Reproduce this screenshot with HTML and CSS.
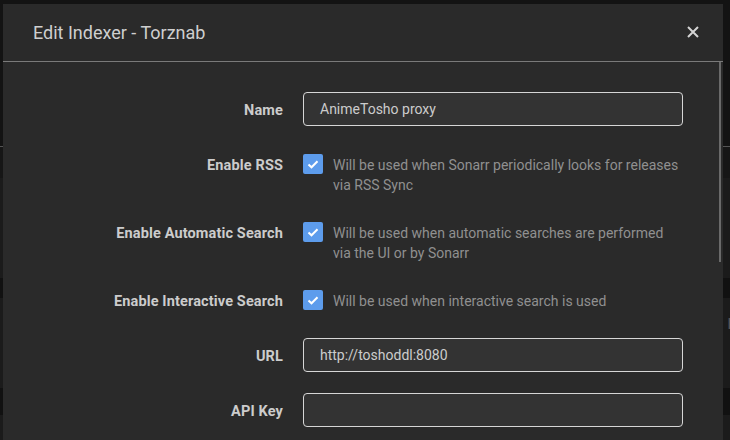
FILE: index.html
```html
<!DOCTYPE html>
<html>
<head>
<meta charset="utf-8">
<link rel="stylesheet" href="styles.css">
</head>
<body>
<div class="page">
  <div class="pg-top"></div>
  <div class="pg-line"></div>
  <div class="pg-a"></div>
  <div class="pg-b"></div>
  <div class="pg-c"></div>
  <div class="pg-d"><span class="pg-letter">r</span></div>
  <div class="pg-e"></div>
  <div class="pg-f"></div>
</div>
<div class="modal">
  <div class="modal-header">
    <h2 class="modal-title">Edit Indexer - Torznab</h2>
    <button class="close-btn" aria-label="Close">
      <svg width="12" height="12" viewBox="0 0 12 12"><path d="M1 1 L11 11 M11 1 L1 11" stroke="#d4d4d4" stroke-width="2" fill="none"/></svg>
    </button>
  </div>
  <div class="modal-body">
    <div class="group">
      <label class="label">Name</label>
      <div class="control"><div class="input">AnimeTosho proxy</div></div>
    </div>
    <div class="group">
      <label class="label">Enable RSS</label>
      <div class="control check-control">
        <span class="checkbox"><svg width="20" height="20" viewBox="0 0 20 20"><path d="M5.5 10.5 L8.5 13.3 L14.5 7.2" stroke="#fff" stroke-width="2" fill="none"/></svg></span>
        <span class="help">Will be used when Sonarr periodically looks for releases via RSS Sync</span>
      </div>
    </div>
    <div class="group">
      <label class="label">Enable Automatic Search</label>
      <div class="control check-control">
        <span class="checkbox"><svg width="20" height="20" viewBox="0 0 20 20"><path d="M5.5 10.5 L8.5 13.3 L14.5 7.2" stroke="#fff" stroke-width="2" fill="none"/></svg></span>
        <span class="help">Will be used when automatic searches are performed via the UI or by Sonarr</span>
      </div>
    </div>
    <div class="group">
      <label class="label">Enable Interactive Search</label>
      <div class="control check-control">
        <span class="checkbox"><svg width="20" height="20" viewBox="0 0 20 20"><path d="M5.5 10.5 L8.5 13.3 L14.5 7.2" stroke="#fff" stroke-width="2" fill="none"/></svg></span>
        <span class="help">Will be used when interactive search is used</span>
      </div>
    </div>
    <div class="group">
      <label class="label">URL</label>
      <div class="control"><div class="input">http://toshoddl:8080</div></div>
    </div>
    <div class="group">
      <label class="label">API Key</label>
      <div class="control"><div class="input"></div></div>
    </div>
  </div>
  <div class="scroll-thumb"></div>
</div>
</body>
</html>
```
FILE: styles.css
```css
* { box-sizing: border-box; }
html, body { margin: 0; padding: 0; }
body {
  width: 730px;
  height: 440px;
  overflow: hidden;
  background: #121212;
  font-family: Roboto, "Liberation Sans", sans-serif;
  position: relative;
}
.page { display: flex; flex-direction: column; }
.pg-top { height: 146px; background: #131313; }
.pg-line { height: 1px; background: #555; }
.pg-a { height: 31px; background: #161616; }
.pg-b { height: 100px; background: #1b1b1b; }
.pg-c { height: 20px; background: #111; }
.pg-d { height: 90px; background: #1b1b1b; display: flex; justify-content: flex-end; padding-top: 12px; }
.pg-e { height: 27px; background: #111; }
.pg-f { height: 25px; background: #1b1b1b; }
.pg-letter { font-size: 20px; line-height: 24px; color: #555; margin-right: -4px; }

.modal {
  position: absolute;
  left: 3px;
  top: 4px;
  width: 720px;
  height: 460px;
  background: #2a2a2a;
  color: #ccc;
}
.modal-header {
  display: flex;
  align-items: flex-start;
  justify-content: space-between;
  border-bottom: 1px solid #7a7a7a;
}
.modal-title {
  margin: 0;
  padding: 15px 50px 15px 30px;
  font-size: 18px;
  line-height: 27px;
  font-weight: 400;
  color: #cfcfcf;
}
.close-btn {
  width: 60px;
  height: 57px;
  padding: 0;
  margin: 0;
  border: 0;
  background: transparent;
  display: flex;
  align-items: center;
  justify-content: center;
  padding-bottom: 1px;
}
.close-btn svg { display: block; }

.modal-body { padding-top: 30px; }
.group {
  display: grid;
  grid-template-columns: 280px 380px;
  column-gap: 20px;
  margin-bottom: 21px;
  min-height: 34px;
  align-items: start;
}
.label {
  display: block;
  height: 34px;
  text-align: right;
  font-weight: 700;
  font-size: 14.5px;
  letter-spacing: 0.13px;
  line-height: 34px;
  padding-top: 2px;
  color: #cccccc;
  white-space: nowrap;
}
.control { min-height: 34px; }
.input {
  height: 34px;
  border: 1px solid #d6d6d6;
  border-radius: 4px;
  background: #333;
  padding: 0 16px;
  font-size: 14px;
  line-height: 33px;
  color: #cccccc;
}
.check-control {
  display: flex;
  align-items: flex-start;
  gap: 10px;
  padding-top: 7px;
}
.checkbox {
  flex: none;
  width: 20px;
  height: 20px;
  border-radius: 2px;
  background: #5d9cec;
  display: block;
}
.checkbox svg { display: block; }
.help {
  flex: 1;
  font-size: 14px;
  line-height: 20px;
  margin-top: 1px;
  margin-bottom: -1px;
  color: #909090;
}
.scroll-thumb {
  position: absolute;
  right: 2px;
  top: 58px;
  width: 2px;
  height: 200px;
  background: #6a6a6a;
}
```
